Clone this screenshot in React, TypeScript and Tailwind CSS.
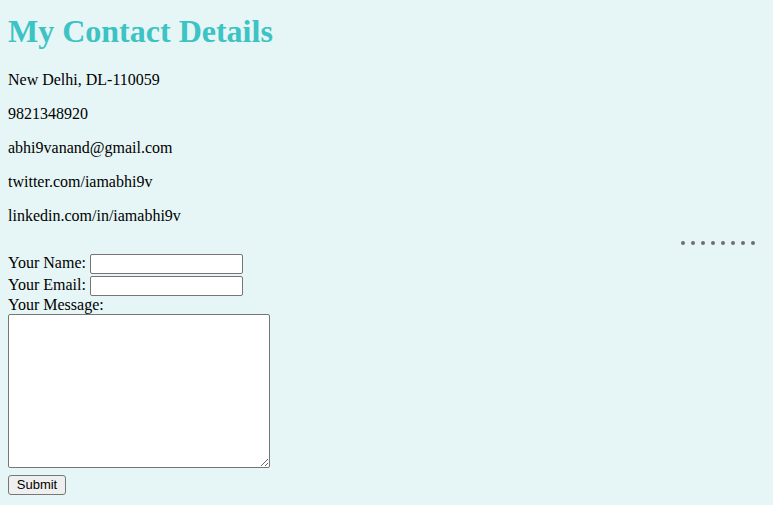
export default function App() {
  const lines = [
    "New Delhi, DL-110059",
    "9821348920",
    "abhi9vanand@gmail.com",
    "twitter.com/iamabhi9v",
    "linkedin.com/in/iamabhi9v",
  ];

  return (
    <div className="min-h-screen bg-[#e6f6f6] px-2 pt-[13px] pb-2 font-['Liberation_Serif','Times_New_Roman',serif] text-[16px] text-black">
      {/* Heading */}
      <h1 className="mb-[21px] text-[32px] leading-[37px] font-bold text-[#3cc3c3]">
        My Contact Details
      </h1>

      {/* Contact lines */}
      {lines.map((line) => (
        <p key={line} className="mb-4 leading-[18px]">
          {line}
        </p>
      ))}

      {/* Dots on the right */}
      <div className="flex h-[11px] items-start justify-end gap-[6px] pr-[10px]">
        {Array.from({ length: 8 }).map((_, i) => (
          <span key={i} className="h-[4px] w-[4px] rounded-full bg-[#6e6e6e]" />
        ))}
      </div>

      {/* Form */}
      <form onSubmit={(e) => e.preventDefault()}>
        <div className="flex h-[22px] items-start">
          <label className="pt-[2px] leading-[18px]">Your Name:</label>
          <input
            type="text"
            className="mt-[2px] ml-[4px] h-[20px] w-[153px] rounded-[2px] border border-[#767676] bg-white px-[2px] text-[13px]"
          />
        </div>
        <div className="flex h-[22px] items-start">
          <label className="pt-[2px] leading-[18px]">Your Email:</label>
          <input
            type="email"
            className="mt-[2px] ml-[4px] h-[20px] w-[153px] rounded-[2px] border border-[#767676] bg-white px-[2px] text-[13px]"
          />
        </div>
        <div className="leading-[18px]">Your Message:</div>
        <textarea className="block h-[154px] w-[262px] resize rounded-[2px] border border-[#767676] bg-white p-[2px] text-[13px]" />
        <button
          type="submit"
          className="mt-[7px] block h-[20px] w-[58px] rounded-[3px] border border-[#767676] bg-[#efefef] font-['Liberation_Sans',Arial,sans-serif] text-[13px] leading-[18px] text-black"
        >
          Submit
        </button>
      </form>
    </div>
  );
}
